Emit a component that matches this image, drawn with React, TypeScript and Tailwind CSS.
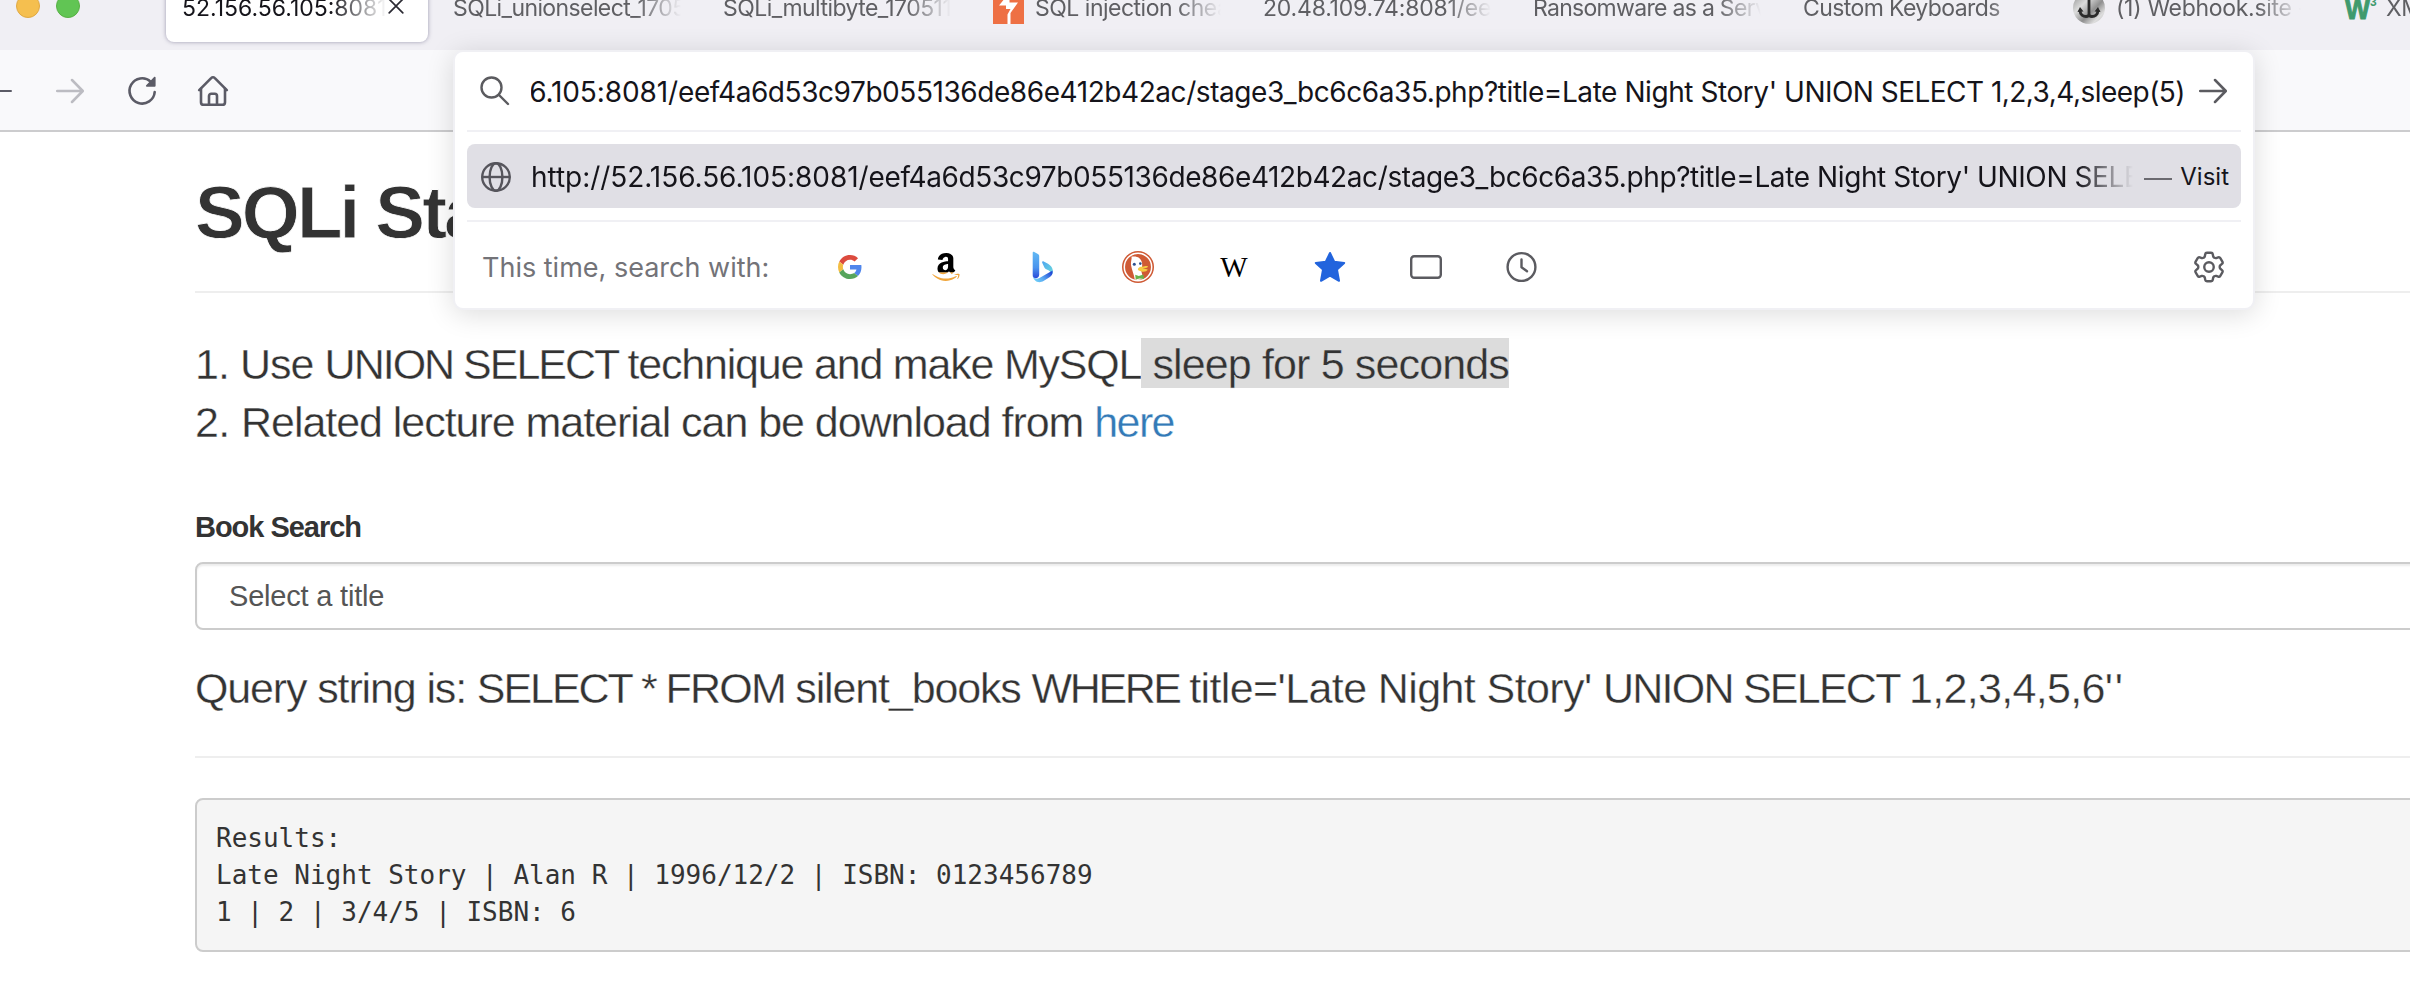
import type { ReactNode } from 'react';
import { FaAmazon } from 'react-icons/fa';
import { HiOutlineCog6Tooth } from 'react-icons/hi2';

function ArrowIcon({ className }: { className: string }) {
  return (
    <svg viewBox="0 0 28 26" fill="none" stroke="currentColor" strokeWidth="2.5" strokeLinecap="round" strokeLinejoin="round" className={className}>
      <path d="M1.2 13H26.5M16 2l10.8 11L16 24" />
    </svg>
  );
}

function ReloadIcon() {
  return (
    <svg viewBox="0 0 32 32" fill="none" className="size-8 text-[#5b5b66]">
      <path d="M24.6 6.6A12.6 12.6 0 1 0 28.7 17" stroke="currentColor" strokeWidth="2.6" strokeLinecap="round" />
      <path d="M29.6 2.6v8.2a.9.9 0 0 1-.9.9h-7.9c-.8 0-1.2-.9-.6-1.5l7.9-8.2c.6-.6 1.5-.2 1.5.6z" fill="currentColor" />
    </svg>
  );
}

function HomeIcon() {
  return (
    <svg viewBox="0 0 32 32" fill="none" stroke="currentColor" strokeWidth="2.6" strokeLinecap="round" strokeLinejoin="round" className="size-8 text-[#5b5b66]">
      <path d="M2.2 15.2 14.4 2.9a2.2 2.2 0 0 1 3.2 0L29.8 15.2" />
      <path d="M4 13.8v13.4A2.6 2.6 0 0 0 6.6 29.8h18.8a2.6 2.6 0 0 0 2.6-2.600V13.800" />
      <path d="M12 29.500V21a2.200 2.200 0 0 1 2.200-2.200h3.600A2.200 2.200 0 0 1 20 21v8.500" />
    </svg>
  );
}

function SearchIcon() {
  return (
    <svg viewBox="0 0 30 30" fill="none" stroke="currentColor" strokeWidth="2.4" strokeLinecap="round" className="size-[30px] text-[#5b5b5f]">
      <circle cx="11.5" cy="11.5" r="10" />
      <path d="M19 19l9 9" />
    </svg>
  );
}

function GlobeIcon() {
  return (
    <svg viewBox="0 0 32 32" fill="none" stroke="currentColor" strokeWidth="2.4" className="mt-0.5 size-8 text-[#56555c]">
      <circle cx="16" cy="16" r="13.8" />
      <ellipse cx="16" cy="16" rx="6.4" ry="13.8" />
      <path d="M2.2 16h27.6" />
    </svg>
  );
}

function GoogleIcon() {
  return (
    <svg viewBox="0 0 48 48" className="size-6">
      <path fill="#dc4b3e" d="M24 9.5c3.54 0 6.71 1.22 9.21 3.6l6.85-6.85C35.9 2.38 30.47 0 24 0 14.62 0 6.51 5.38 2.56 13.22l7.98 6.19C12.43 13.72 17.74 9.5 24 9.5z" />
      <path fill="#4f86ec" d="M46.98 24.55c0-1.57-.15-3.09-.38-4.55H24v9.02h12.94c-.58 2.96-2.26 5.48-4.78 7.18l7.73 6c4.51-4.18 7.09-10.36 7.09-17.65z" />
      <path fill="#f3bd42" d="M10.53 28.59c-.48-1.45-.76-2.99-.76-4.59s.27-3.14.76-4.59l-7.98-6.19C.92 16.46 0 20.12 0 24c0 3.88.92 7.54 2.56 10.78l7.97-6.19z" />
      <path fill="#57a55c" d="M24 48c6.480 0 11.930-2.130 15.890-5.810l-7.730-6c-2.150 1.450-4.920 2.300-8.160 2.300-6.260 0-11.570-4.220-13.470-9.910l-7.980 6.190C6.510 42.620 14.620 48 24 48z" />
    </svg>
  );
}

function AmazonIcon() {
  return (
    <div className="grid">
      <FaAmazon className="col-start-1 row-start-1 size-8 text-[#f0a63c] [clip-path:inset(68%_0_0_0)]" />
      <FaAmazon className="col-start-1 row-start-1 size-8 text-black [clip-path:inset(0_0_32%_0)]" />
    </div>
  );
}

function BingIcon() {
  return (
    <svg viewBox="0 0 32 32" className="size-8">
      <defs>
        <linearGradient id="bar" x1="0" y1="0" x2="0" y2="1">
          <stop offset="0" stopColor="#62b9f3" />
          <stop offset="0.6" stopColor="#4a94ee" />
          <stop offset="1" stopColor="#2a49d8" />
        </linearGradient>
        <linearGradient id="sweep" x1="0" y1="0.8" x2="1" y2="0.3">
          <stop offset="0" stopColor="#72d4f8" />
          <stop offset="0.45" stopColor="#5aa9f2" />
          <stop offset="1" stopColor="#2447d5" />
        </linearGradient>
        <linearGradient id="petal" x1="0" y1="0" x2="1" y2="1">
          <stop offset="0" stopColor="#4fa5f0" />
          <stop offset="1" stopColor="#6bdcdc" />
        </linearGradient>
      </defs>
      <path fill="url(#petal)" d="M16.2 11.7c-.4-1 .5-1.8 1.500-1.300l4.300 2.400c3.800 2.200 5.600 5.800 4.500 10l-2 1.500c.8-2 0-4-2-5l-2.800-1.400a3 3 0 0 1-1.300-1.500z" />
      <path fill="url(#sweep)" d="M6.700 24c0 4 3 7.200 6.800 7.200 1.600 0 2.800-.5 4-1.200l6-3.700c2.400-1.500 3.600-4 3-6.800-1 1-1.800 1-3 1.700l-10 5.800c-3 1.600-6.800.4-6.800-3z" />
      <path fill="url(#bar)" d="M6.700 1.800c0-.8.900-1.200 1.600-.8l3.600 1.900c.9.500 1.300 1.200 1.300 2.300v18.600c0 4.400-6.500 4.600-6.500.2z" />
    </svg>
  );
}

function DuckIcon() {
  return (
    <svg viewBox="0 0 32 32" className="size-8">
      <circle cx="16" cy="16" r="16" fill="#cf5a35" />
      <circle cx="16" cy="16" r="13.7" fill="none" stroke="#fff" strokeWidth="1.5" />
      <path fill="#fff" d="M12.8 28.5c-.8-5-3-10-3.700-14C8.500 10 10.500 6.500 9.200 5.800c5-1.300 9.800.7 10.800 5.700.7 3.500-.5 6-.6 9l1.800 6.800c-2.500 1.700-6 1.900-8.400 1.200z" />
      <circle cx="12.3" cy="13.3" r="1.5" fill="#2d4f8e" />
      <circle cx="18.3" cy="12.6" r="1.3" fill="#2d4f8e" />
      <path fill="#f6c943" d="M16 17.800c1-2.300 4.500-2 6.500-2.500 1.500-.4 3.700-.3 3.500.5-.4 1.300-3.500 1.500-5 2 1.500.6 4.800 0 4.600 1-.4 1.800-4 2.200-6 1.700-2-.4-4.200-1-3.600-2.700z" />
      <path fill="#67b34b" d="m13.200 23.800 3.600 1.300 4.600-1.500.6 4.300-4.500-.4-3.800 1z" />
    </svg>
  );
}

function StarIcon() {
  return (
    <svg viewBox="0 0 32 32" fill="#2264dd" stroke="#2264dd" strokeWidth="2" strokeLinejoin="round" className="size-8">
      <path d="m16 2 4.200 8.800 10 1.100-7.200 6.700 2 11.200-9-5.200-9 5.200 2-11.200L1.800 11.900l10-1.100z" />
    </svg>
  );
}

function TabsIcon() {
  return (
    <svg viewBox="0 0 32 32" fill="none" stroke="#5b5b60" strokeWidth="2.4" className="size-8">
      <rect x="1.2" y="5.2" width="29.600" height="21.600" rx="3" />
    </svg>
  );
}

function ClockIcon() {
  return (
    <svg viewBox="0 0 32 32" fill="none" stroke="#5b5b60" strokeWidth="2.4" strokeLinecap="round" strokeLinejoin="round" className="size-8">
      <circle cx="15.5" cy="16" r="13.9" />
      <path d="M15.5 8.500V16.200l5.500 4" />
    </svg>
  );
}

function BurpIcon() {
  return (
    <svg viewBox="0 0 31 31" className="size-[31px] shrink-0">
      <path fill="#ee7044" d="M0 0h31v31H0z" />
      <path fill="#fff" d="M14.500 0h2v9.500h8.500L17.500 20v11h-3V21.500l3-5.500h-4.500v-3.500H6L14.500 2z" />
    </svg>
  );
}

function AnchorIcon() {
  return (
    <svg viewBox="0 0 32 32" className="size-8 shrink-0">
      <defs>
        <linearGradient id="disc" x1="0" y1="0" x2="1" y2="1">
          <stop offset="0" stopColor="#8a8a8a" />
          <stop offset="0.35" stopColor="#dcdcdc" />
          <stop offset="0.6" stopColor="#8f8f8f" />
          <stop offset="0.8" stopColor="#dedede" />
          <stop offset="1" stopColor="#b5b5b5" />
        </linearGradient>
      </defs>
      <circle cx="16" cy="16" r="16" fill="url(#disc)" />
      <path d="M16 4v20M7 18c0 5 3.500 6.500 6 6.500 2 0 3-1 3-2.500 0 1.500 1 2.500 3 2.500 2.500 0 6-1.500 6-6.500" fill="none" stroke="#2b2b2b" strokeWidth="2.8" />
      <path d="m4.500 20 2.500-5 3.500 4.500zM27.500 20 25 15l-3.500 4.500z" fill="#2b2b2b" />
    </svg>
  );
}

function SchoolsIcon() {
  return (
    <svg viewBox="0 0 32 32" className="size-8 shrink-0 overflow-visible font-['Liberation_Sans'] font-bold" fill="#3f9a6d">
      <text x="2" y="26.5" fontSize="30" textLength="25" lengthAdjust="spacingAndGlyphs" stroke="#3f9a6d" strokeWidth="1">W</text>
      <text x="27" y="13.5" fontSize="12">3</text>
    </svg>
  );
}

function Tab({ icon, title, className = '' }: { icon?: ReactNode; title: string; className?: string }) {
  return (
    <div className="flex h-full w-[270px] shrink-0 items-center gap-[11px] pl-[17px] pr-[25px] text-[#5f5f63]">
      {icon}
      <span className={`min-w-0 flex-1 overflow-hidden whitespace-nowrap [mask-image:linear-gradient(to_left,transparent,black_44px)] ${className}`}>
        {title}
      </span>
    </div>
  );
}

function TabStrip() {
  return (
    <div className="h-[50px] overflow-hidden bg-[#f0eff4]">
      <div className="-mt-[26px] flex h-[68px] w-[2700px] items-center pl-4 text-[23px] leading-8">
        <div className="mb-1 flex gap-4">
          <span className="size-6 rounded-full border border-[#e0a944] bg-[#f5bf4f]" />
          <span className="size-6 rounded-full border border-[#58b044] bg-[#61c554]" />
        </div>
        <div className="ml-[86px] mr-2 flex h-full w-[262px] shrink-0 items-center gap-px rounded-b-lg bg-white pl-4 pr-6 text-[#15141a] shadow-[0_0_4px_rgba(100,95,130,0.6)]">
          <span className="min-w-0 flex-1 overflow-hidden whitespace-nowrap [mask-image:linear-gradient(to_left,transparent,black_56px)]">
            52.156.56.105:8081/ee
          </span>
          <svg viewBox="0 0 16 16" stroke="#2b2a33" strokeWidth="1.7" strokeLinecap="round" className="mb-1 size-4 shrink-0">
            <path d="m1.200 1.200 13.600 13.600M14.800 1.200 1.200 14.800" />
          </svg>
        </div>
        <Tab title="SQLi_unionselect_1705" className="tracking-[-0.6px]" />
        <Tab title="SQLi_multibyte_170511" className="tracking-[-0.55px]" />
        <Tab icon={<BurpIcon />} title="SQL injection cheat" className="tracking-[-0.5px]" />
        <Tab title="20.48.109.74:8081/eef" className="tracking-[-0.2px]" />
        <Tab title="Ransomware as a Servi" className="tracking-[-0.7px]" />
        <Tab title="Custom Keyboards" className="tracking-[-0.6px]" />
        <Tab icon={<AnchorIcon />} title="(1) Webhook.site - T" className="tracking-[-0.3px]" />
        <Tab icon={<SchoolsIcon />} title="XML Tutorial" className="tracking-[-0.5px]" />
      </div>
    </div>
  );
}

function Toolbar() {
  return (
    <div className="flex h-[82px] items-center border-b-2 border-[#ccccce] bg-[#f9f9fb] pt-0.5">
      <span className="h-[2.5px] w-3 rounded-r-full bg-[#5b5b66]" />
      <ArrowIcon className="ml-11 h-[26px] w-7 text-[#bcbcc2]" />
      <div className="ml-[42px] flex gap-[39px]">
        <ReloadIcon />
        <HomeIcon />
      </div>
    </div>
  );
}

function UrlPopup() {
  return (
    <div className="absolute left-[453px] top-[50px] flex h-[260px] w-[1802px] flex-col rounded-[10px] border-2 border-[#f0f0f4] bg-white px-3 text-[28px] text-[#15141a] shadow-[0_4px_28px_rgba(0,0,0,0.14)]">
      <div className="flex h-[80px] items-center border-b-2 border-[#f0f0f4] pl-[13px] pr-[13px]">
        <SearchIcon />
        <div className="ml-[21px] flex w-[1654px] justify-end overflow-hidden">
          <span className="whitespace-pre pt-px leading-10 tracking-[-0.433px]">
            <span className="tracking-[-0.1px]">6.105:8081/</span>
            {"eef4a6d53c97b055136de86e412b42ac/stage3_bc6c6a35.php?title=Late Night Story' "}
            <span className="tracking-[-0.53px]">UNION SELECT 1,2,3,4,sleep(5)</span>
          </span>
        </div>
        <ArrowIcon className="ml-[14px] h-[26px] w-7 shrink-0 text-[#5b5b60]" />
      </div>
      <div className="mt-3 flex h-16 items-center rounded-lg bg-[#e0dfe5] pl-[13px] pr-3">
        <GlobeIcon />
        <span className="ml-[19px] w-[1602px] overflow-hidden whitespace-pre pt-0.5 leading-10 tracking-[-0.4px] [mask-image:linear-gradient(to_left,transparent,black_56px)]">
          <span className="tracking-[-0.05px]">http://52.156.56.105:8081/</span>
          eef4a6d53c97b055136de86e412b42ac/stage3_bc6c6a35.php?title=Late Night Story' UNION SELECT
        </span>
        <span className="ml-[11px] mt-1.5 h-[2px] w-7 bg-[#6b6a70]" />
        <span className="ml-auto pt-0.5 text-2xl">Visit</span>
      </div>
      <div className="mt-3 flex h-[88px] items-center border-t-2 border-[#f0f0f4] pl-[15px] pr-4 pt-[3px]">
        <span className="w-[352px] pt-[3px] text-[27px] text-[#737378]">This time, search with:</span>
        <div className="grid grid-cols-[repeat(8,32px)] place-items-center gap-16">
          <GoogleIcon />
          <AmazonIcon />
          <BingIcon />
          <DuckIcon />
          <span className="font-['Liberation_Serif'] text-[29px] leading-8 text-black">W</span>
          <StarIcon />
          <TabsIcon />
          <ClockIcon />
        </div>
        <HiOutlineCog6Tooth className="-mr-[3px] ml-auto size-[38px] text-[#5b5b60]" />
      </div>
    </div>
  );
}

function PageContent() {
  return (
    <main className="flex flex-col pl-[195px] pt-[41px] font-['Liberation_Sans',sans-serif] text-[#333]">
      <h1 className="text-[74.5px] font-bold leading-[80px] tracking-[-2.85px] [-webkit-text-stroke:0.8px_white]">SQLi Stage 3</h1>
      <hr className="mt-[38px] border-t-2 border-[#eee]" />
      <ol className="mt-[42px] whitespace-pre text-[43px] leading-[58px] [-webkit-text-stroke:0.35px_white]">
        <li className="tracking-[-1.2px]">
          <span className="tracking-[-0.95px]">1. Use </span>
          <span className="tracking-[-2px]">UNION SELECT </span>
          technique and make MySQL
          <span className="bg-[#dcdcdc] pt-0.5 tracking-[-0.86px] [-webkit-text-stroke-color:#dcdcdc]"> sleep for 5 seconds</span>
        </li>
        <li className="tracking-[-1.04px]">
          <span className="tracking-[-0.6px]">2. </span>
          {'Related lecture material can be download from '}
          <a className="tracking-[-1.6px] text-[#337ab7]">here</a>
        </li>
      </ol>
      <label className="mt-14 text-[29px] font-bold leading-10 tracking-[-1.03px]">Book Search</label>
      <div className="-mr-2 mt-[15px] flex h-[68px] items-center rounded-l-lg border-2 border-[#ccc] pl-[32px] pt-0.5 text-[29px] tracking-[-0.2px] text-[#555] shadow-[inset_0_2px_2px_rgba(0,0,0,0.075)]">
        Select a title
      </div>
      <p className="mt-7 whitespace-pre text-[43px] leading-[60px] tracking-[-1.134px] [-webkit-text-stroke:0.35px_white]">
        {'Query string is: '}
        <span className="tracking-[-2.05px]">SELECT * </span>
        <span className="tracking-[-1.75px]">FROM </span>
        {'silent_books '}
        <span className="tracking-[-2.4px]">WHERE </span>
        <span className="tracking-[-0.6px]">title='Late Night Story' </span>
        <span className="tracking-[-1.75px]">UNION SELECT </span>
        <span className="tracking-[-0.7px]">1,2,3,4,5,6</span>
        <span className="tracking-[2px]">''</span>
      </p>
      <hr className="mt-[38px] border-t-2 border-[#eee]" />
      <pre className="-mr-2 mt-10 h-[154px] rounded-l-lg border-2 border-[#ccc] bg-[#f5f5f5] pl-[19px] pt-5 font-['DejaVu_Sans_Mono',monospace] text-[26px] leading-[37px]">
        {'Results:\nLate Night Story | Alan R | 1996/12/2 | ISBN: 0123456789\n1 | 2 | 3/4/5 | ISBN: 6'}
      </pre>
    </main>
  );
}

export default function App() {
  return (
    <div className="relative h-[984px] w-[2410px] overflow-hidden bg-white font-[Inter,sans-serif]">
      <TabStrip />
      <Toolbar />
      <PageContent />
      <UrlPopup />
    </div>
  );
}
